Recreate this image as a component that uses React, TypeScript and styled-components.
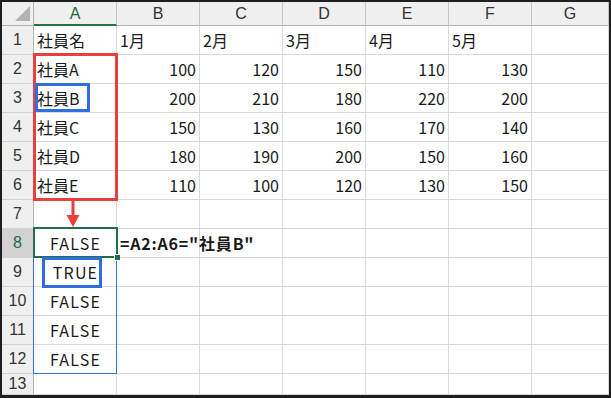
import React from "react";
import styled, { createGlobalStyle } from "styled-components";

const Global = createGlobalStyle`
  html, body { margin: 0; padding: 0; background: #1f1f1f; }
  body { font-family: "Noto Sans CJK JP", "Noto Sans", sans-serif; }
`;

const Frame = styled.div`
  width: 611px;
  height: 398px;
  box-sizing: border-box;
  padding: 2px 2px 3px 2px;
  background: #1f1f1f;
  overflow: hidden;
`;

const Sheet = styled.div`
  width: 607px;
  height: 393px;
  background: #ffffff;
  display: grid;
  grid-template-columns: 32px repeat(6, 83px) 1fr;
  grid-template-rows: 24px repeat(12, 29px) 1fr;
  font-family: "Noto Sans CJK JP", "Noto Sans", sans-serif;
  color: #1a1a1a;
  position: relative;
`;

const Corner = styled.div`
  grid-column: 1;
  grid-row: 1;
  background: #efefef;
  border-right: 1px solid #b4b4b4;
  border-bottom: 1px solid #b4b4b4;
  box-sizing: border-box;
  display: flex;
  align-items: flex-end;
  justify-content: flex-end;
  padding: 0 3px 4px 0;
`;

const ColHead = styled.div<{ $sel?: boolean }>`
  background: #efefef;
  box-sizing: border-box;
  border-right: 1px solid #c4c4c4;
  border-bottom: ${(p) => (p.$sel ? "2px solid #217346" : "1px solid #b4b4b4")};
  display: flex;
  align-items: center;
  justify-content: center;
  font-size: 16px;
  color: ${(p) => (p.$sel ? "#1d6a40" : "#333")};
  padding-top: ${(p) => (p.$sel ? "1px" : "0")};
  font-family: "Liberation Sans", "Noto Sans", sans-serif;
`;

const RowHead = styled.div<{ $sel?: boolean }>`
  grid-column: 1;
  background: ${(p) => (p.$sel ? "#d2d2d2" : "#efefef")};
  box-sizing: border-box;
  border-right: 1px solid #b4b4b4;
  border-bottom: 1px solid #d4d4d4;
  display: flex;
  align-items: center;
  justify-content: center;
  font-size: 16px;
  color: ${(p) => (p.$sel ? "#1d6a40" : "#333")};
  font-family: "Liberation Sans", "Noto Sans", sans-serif;
`;

const Cell = styled.div<{ $align?: "left" | "right" | "center" }>`
  box-sizing: border-box;
  border-right: 1px solid #dadada;
  border-bottom: 1px solid #dadada;
  display: flex;
  align-items: center;
  justify-content: ${(p) =>
    p.$align === "right" ? "flex-end" : p.$align === "center" ? "center" : "flex-start"};
  padding: 0 3px 0 3px;
  font-size: 16px;
  white-space: nowrap;
  overflow: visible;
  min-width: 0;
`;

const Spill = styled.span`
  position: relative;
  z-index: 3;
  letter-spacing: 1.2px;
  margin-right: -1px;
`;

const Formula = styled.span`
  font-weight: 700;
  font-size: 16px;
  position: relative;
  z-index: 3;
  margin-left: 0px;
  letter-spacing: 0.8px;
`;

const Overlay = styled.div<{ $col: number; $rows: string }>`
  grid-column: ${(p) => p.$col};
  grid-row: ${(p) => p.$rows};
  pointer-events: none;
  z-index: 4;
  box-sizing: border-box;
`;

const RedBox = styled(Overlay)`
  margin: -2px -1px -1px -1px;
  border: 3px solid #e8403f;
`;

const NameBox = styled(Overlay)`
  margin: -1px 0 1px 1px;
  width: 55px;
  border: 3px solid #2f6de1;
`;

const Arrow = styled(Overlay)`
  display: flex;
  align-items: flex-start;
  padding-left: 32px;
`;

const Selection = styled(Overlay)`
  margin: -2px -1px 0 -1px;
  border: 2px solid #1f7145;
  position: relative;
`;

const Handle = styled.span`
  position: absolute;
  right: -5px;
  bottom: -5px;
  width: 5px;
  height: 5px;
  background: #1f7145;
  border: 1px solid #ffffff;
`;

const SpillBorder = styled(Overlay)`
  margin: -1px 0 0 -1px;
  border: 1px solid #3a6fd8;
  z-index: 2;
`;

const TrueBox = styled(Overlay)`
  margin: -1px 0 -1px 8px;
  width: 60px;
  border: 3px solid #2f6de1;
`;

const cols = ["A", "B", "C", "D", "E", "F", "G"];

type Row = (string | number)[];
const data: Row[] = [
  ["社員名", "1月", "2月", "3月", "4月", "5月", ""],
  ["社員A", 100, 120, 150, 110, 130, ""],
  ["社員B", 200, 210, 180, 220, 200, ""],
  ["社員C", 150, 130, 160, 170, 140, ""],
  ["社員D", 180, 190, 200, 150, 160, ""],
  ["社員E", 110, 100, 120, 130, 150, ""],
  ["", "", "", "", "", "", ""],
  ["FALSE", "", "", "", "", "", ""],
  ["TRUE", "", "", "", "", "", ""],
  ["FALSE", "", "", "", "", "", ""],
  ["FALSE", "", "", "", "", "", ""],
  ["FALSE", "", "", "", "", "", ""],
  ["", "", "", "", "", "", ""],
];

export default function App() {
  return (
    <>
      <Global />
      <Frame>
        <Sheet>
          <Corner>
            <svg width="15" height="15" viewBox="0 0 15 15">
              <polygon points="15,0 15,15 0,15" fill="#b3b3b3" />
            </svg>
          </Corner>
          {cols.map((c, i) => (
            <ColHead key={c} $sel={i === 0} style={{ gridColumn: i + 2, gridRow: 1 }}>
              {c}
            </ColHead>
          ))}
          {data.map((row, r) => (
            <React.Fragment key={r}>
              <RowHead $sel={r === 7} style={{ gridRow: r + 2 }}>
                {r + 1}
              </RowHead>
              {row.map((v, c) => {
                const isBool = v === "TRUE" || v === "FALSE";
                const align = typeof v === "number" ? "right" : isBool ? "center" : "left";
                return (
                  <Cell key={c} $align={align} style={{ gridRow: r + 2, gridColumn: c + 2 }}>
                    {isBool ? <Spill>{v}</Spill> : r === 7 && c === 1 ? <Formula>=A2:A6="社員B"</Formula> : v}
                  </Cell>
                );
              })}
            </React.Fragment>
          ))}
          <RedBox $col={2} $rows="3 / 8" />
          <NameBox $col={2} $rows="4 / 5" />
          <Arrow $col={2} $rows="8 / 9">
            <svg width="14" height="28" viewBox="0 0 14 28">
              <rect x="5.5" y="0" width="3" height="16" fill="#e8403f" />
              <polygon points="0.5,15 13.5,15 7,27" fill="#e8403f" />
            </svg>
          </Arrow>
          <Selection $col={2} $rows="9 / 10">
            <Handle />
          </Selection>
          <SpillBorder $col={2} $rows="10 / 14" />
          <TrueBox $col={2} $rows="10 / 11" />
        </Sheet>
      </Frame>
    </>
  );
}
